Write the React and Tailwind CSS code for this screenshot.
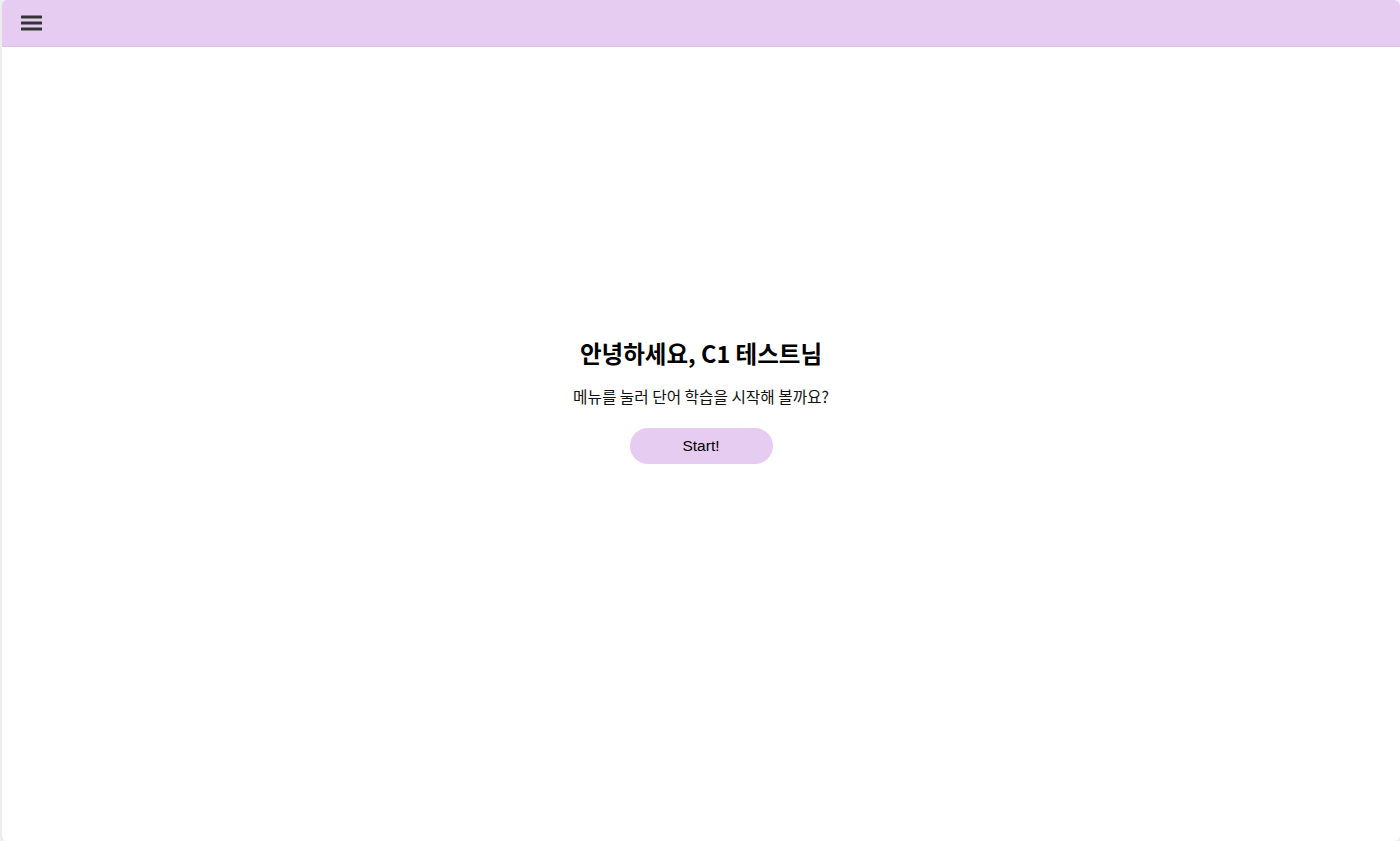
import React from 'react';

function MenuIcon() {
  return (
    <svg className="w-[24px] h-[24px] text-[#333]" viewBox="0 0 24 24" fill="currentColor">
      <rect x="2" y="4.5" width="21" height="3" rx="0.5" />
      <rect x="2" y="10.5" width="21" height="3" rx="0.5" />
      <rect x="2" y="16.5" width="21" height="3" rx="0.5" />
    </svg>
  );
}

export default function App() {
  return (
    <div className="h-[841px] w-[1400px] bg-[#f0f0f0] font-['Noto_Sans_CJK_KR','Noto_Sans',sans-serif]">
      <div className="h-full flex flex-col bg-white rounded-md overflow-hidden border-l-2 border-[#ececec]">
        <header className="h-[47px] flex items-center px-[17px] bg-[#e7ccf1] border-b border-[#d8c4df]">
          <button className="p-0">
            <MenuIcon />
          </button>
        </header>
        <main className="flex-1 flex flex-col items-center pt-[289px]">
          <h1 className="text-[23.5px] leading-[34px] font-bold text-black">안녕하세요, C1 테스트님</h1>
          <p className="mt-[16px] text-[15.7px] leading-[22px] text-[#111]">메뉴를 눌러 단어 학습을 시작해 볼까요?</p>
          <button className="mt-[20px] w-[143px] h-[36px] rounded-full bg-[#e7ccf1] text-[15.5px] text-black font-['Liberation_Sans',Arial,sans-serif]">
            Start!
          </button>
        </main>
      </div>
    </div>
  );
}
